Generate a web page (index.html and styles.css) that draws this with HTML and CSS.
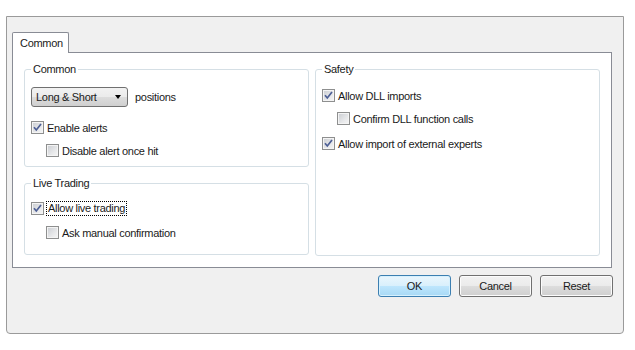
FILE: index.html
```html
<!DOCTYPE html>
<html lang="en">
  <head>
    <meta charset="UTF-8" />
    <title>Expert Properties</title>
    <link rel="stylesheet" href="styles.css">
  </head>
  <body>
    <div class="dialog">
      <div class="tabs">
        <div class="tab">Common</div>
      </div>

      <div class="panel">
        <div class="column">
          <fieldset class="group group-common">
            <legend>Common</legend>
            <div class="select-row">
              <div class="select">
                <span>Long &amp; Short</span>
                <span class="arrow"></span>
              </div>
              <span>positions</span>
            </div>
            <label class="check-row row-enable">
              <span class="cb checked"><svg viewBox="0 0 13 13"><path d="M3 6.2 L5.3 9 L10 3" /></svg></span>
              <span>Enable alerts</span>
            </label>
            <label class="check-row indent row-next">
              <span class="cb"></span>
              <span>Disable alert once hit</span>
            </label>
          </fieldset>

          <fieldset class="group group-live">
            <legend>Live Trading</legend>
            <label class="check-row">
              <span class="cb checked"><svg viewBox="0 0 13 13"><path d="M3 6.2 L5.3 9 L10 3" /></svg></span>
              <span class="focus">Allow live trading</span>
            </label>
            <label class="check-row indent row-live-next">
              <span class="cb"></span>
              <span>Ask manual confirmation</span>
            </label>
          </fieldset>
        </div>

        <fieldset class="group group-safety">
          <legend>Safety</legend>
          <label class="check-row">
            <span class="cb checked"><svg viewBox="0 0 13 13"><path d="M3 6.2 L5.3 9 L10 3" /></svg></span>
            <span>Allow DLL imports</span>
          </label>
          <label class="check-row indent row-next">
            <span class="cb"></span>
            <span>Confirm DLL function calls</span>
          </label>
          <label class="check-row row-last">
            <span class="cb checked"><svg viewBox="0 0 13 13"><path d="M3 6.2 L5.3 9 L10 3" /></svg></span>
            <span>Allow import of external experts</span>
          </label>
        </fieldset>
      </div>

      <div class="buttons">
        <button class="btn default">OK</button>
        <button class="btn">Cancel</button>
        <button class="btn">Reset</button>
      </div>
    </div>
  </body>
</html>
```

FILE: styles.css
```css
:root {
  --dialog-bg: #f0f0f0;
  --frame: #9a9a9a;
  --panel-border: #898c95;
  --group-border: #d5dfe5;
  --text: #1a1a1a;
}

body {
  margin: 0;
  background: #ffffff;
  font-family: "Liberation Sans", Arial, sans-serif;
  font-size: 11px;
  letter-spacing: -0.3px;
  color: var(--text);
}

.dialog {
  box-sizing: border-box;
  width: 618px;
  height: 318px;
  margin: 16px 0 0 6px;
  padding: 15px 11px 0 5px;
  background: var(--dialog-bg);
  border: 1px solid var(--frame);
  border-radius: 0 0 4px 4px;
}

.tabs {
  display: flex;
}

.tab {
  position: relative;
  box-sizing: border-box;
  width: 57px;
  height: 21px;
  margin-bottom: -1px;
  padding: 3px 0 0 7px;
  background: #ffffff;
  border: 1px solid var(--panel-border);
  border-bottom: none;
  border-radius: 2px 2px 0 0;
  line-height: 14px;
}

.panel {
  box-sizing: border-box;
  width: 600px;
  height: 216px;
  display: grid;
  grid-template-columns: 285px 285px;
  column-gap: 6px;
  padding: 9px 11px 0 11px;
  background: #ffffff;
  border: 1px solid var(--panel-border);
}

.column {
  display: flex;
  flex-direction: column;
}

.group {
  margin: 0;
  min-width: 0;
  padding: 0 6px;
  border: 1px solid var(--group-border);
  border-radius: 3px;
  display: flex;
  flex-direction: column;
}

.group legend {
  padding: 0 2px;
  line-height: 14px;
}

.group-common {
  padding-top: 11px;
  padding-bottom: 7px;
}

.group-live {
  margin-top: 9px;
  padding-top: 10px;
  padding-bottom: 13px;
}

.group-safety {
  align-self: stretch;
  height: 194px;
  box-sizing: border-box;
  padding-top: 11px;
}

.select-row {
  display: flex;
  align-items: center;
  gap: 7px;
}

.select {
  box-sizing: border-box;
  width: 97px;
  height: 20px;
  display: flex;
  align-items: center;
  justify-content: space-between;
  padding: 0 4px 0 4px;
  border: 1px solid #707070;
  border-radius: 3px;
  background: linear-gradient(#f2f2f2 0%, #ebebeb 49%, #dddddd 50%, #cfcfcf 100%);
}

.arrow {
  width: 0;
  height: 0;
  margin-right: 2px;
  border-left: 3.5px solid transparent;
  border-right: 3.5px solid transparent;
  border-top: 4px solid #000000;
}

.check-row {
  display: flex;
  align-items: center;
  gap: 3px;
  height: 17px;
}

.row-enable {
  margin-top: 12px;
}

.row-next {
  margin-top: 6px;
}

.row-live-next {
  margin-top: 7px;
}

.row-last {
  margin-top: 8px;
}

.indent {
  padding-left: 15px;
}

.cb {
  box-sizing: border-box;
  flex: none;
  width: 13px;
  height: 13px;
  border: 1px solid #8e8f8f;
  background: linear-gradient(135deg, #c9ccd1 0%, #e7e8ea 60%, #f6f6f6 100%);
  box-shadow: inset 0 0 0 1px #f4f4f4;
  position: relative;
}

.cb svg {
  position: absolute;
  left: -1px;
  top: -1px;
  width: 13px;
  height: 13px;
}

.cb svg path {
  fill: none;
  stroke: #4d5f95;
  stroke-width: 1.7;
}

.focus {
  outline: 1px dotted #000000;
  outline-offset: 0;
  padding: 0 1px;
  line-height: 13px;
}

.buttons {
  display: flex;
  justify-content: flex-end;
  gap: 8px;
  margin-top: 7px;
  margin-right: -1px;
}

.btn {
  box-sizing: border-box;
  width: 73px;
  height: 22px;
  padding: 0;
  font-family: inherit;
  font-size: 11px;
  letter-spacing: -0.3px;
  color: var(--text);
  border: 1px solid #707070;
  border-radius: 3px;
  background: linear-gradient(#f2f2f2 0%, #ebebeb 49%, #dddddd 50%, #cfcfcf 100%);
  box-shadow: inset 0 0 0 1px #fcfcfc;
}

.btn.default {
  border-color: #3c7fb1;
  background: linear-gradient(#eaf6fd 0%, #d9f0fc 49%, #bee6fd 50%, #a7d9f5 100%);
  box-shadow: inset 0 0 0 1px #d6f1fe;
}
```
